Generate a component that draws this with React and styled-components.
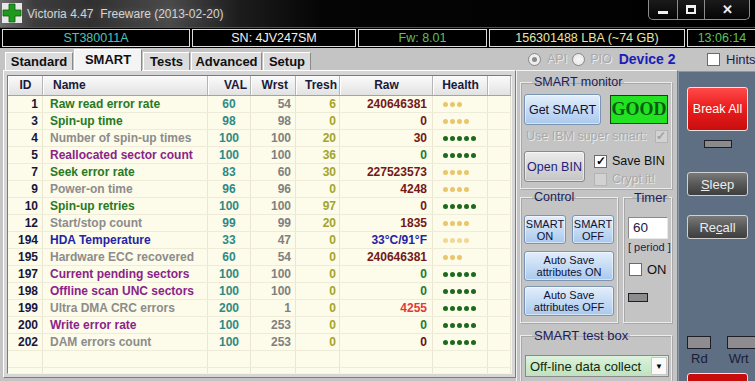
import React from 'react';
import styled, { createGlobalStyle } from 'styled-components';

const Global = createGlobalStyle`
  html, body { margin: 0; padding: 0; background: #000; }
  body { width: 755px; height: 381px; overflow: hidden; font-family: "Liberation Sans", Arial, sans-serif; }
  * { box-sizing: border-box; }
`;

const Window = styled.div`
  width: 755px; height: 381px; display: flex; flex-direction: column;
  background: #000; overflow: hidden;
`;

const TitleBar = styled.div`
  height: 28px; flex: none; display: flex; align-items: flex-start;
  background: linear-gradient(90deg, #6e6e6e 0, #3c3c3c 34px, #303030 90px, #4a4a4a 170px, #1c1c1c 240px, #050505 320px, #000 100%);
  border-bottom: 1px solid #505050;
`;

const AppIcon = styled.svg`
  margin: 3px 0 0 2px; flex: none;
`;

const TitleText = styled.span`
  margin-left: 5px; line-height: 28px; font-size: 12px; color: #d4d4d4;
  white-space: pre; text-shadow: 0 0 6px rgba(255,255,255,0.25);
`;

const WinButtons = styled.div`
  margin-left: auto; margin-right: 5px; display: flex; height: 20px;
  border: 1px solid #8c8c8c; border-top: none; border-radius: 0 0 5px 5px; overflow: hidden;
  background: linear-gradient(#1a1a1a, #050505);
`;

const WinBtn = styled.div`
  width: ${p => p.$w}px; display: flex; align-items: center; justify-content: center;
  color: #f0f0f0; font-weight: bold; font-size: 13px;
  & + & { border-left: 1px solid #8c8c8c; }
`;

const MinGlyph = styled.div`
  width: 10px; height: 3px; background: #f2f2f2; margin-top: 5px;
`;
const MaxGlyph = styled.div`
  width: 10px; height: 9px; border: 2px solid #f2f2f2; border-top-width: 3px;
`;

const InfoBar = styled.div`
  height: 20px; flex: none; display: flex; gap: 2px; padding: 1px 0 1px 2px; background: #000;
`;

const InfoCell = styled.div`
  width: ${p => p.$w}px; flex: none; height: 18px; border: 1px solid #dcdcdc;
  color: ${p => p.$c}; font-size: 12.5px; line-height: 16px; text-align: center; white-space: nowrap;
`;

const Body = styled.div`
  flex: 1; display: flex; background: #c4c4c4; min-height: 0;
`;

const LeftPane = styled.div`
  width: 516px; flex: none; display: flex; flex-direction: column; padding: 0 0 3px 3px;
`;

const TabRow = styled.div`
  height: 22px; flex: none; display: flex; align-items: flex-end; padding-left: 2px; gap: 1px;
`;

const Tab = styled.div`
  width: ${p => p.$w}px; height: ${p => (p.$active ? 22 : 18)}px;
  display: flex; align-items: center; justify-content: center;
  font-weight: bold; font-size: 13px; color: #101010;
  background: ${p => (p.$active ? '#f4f4f4' : '#dcdcdc')};
  border-top: 1px solid #fff; border-left: 1px solid #fff; border-right: 1px solid #8a8a8a;
  margin-bottom: ${p => (p.$active ? -1 : 0)}px; position: relative;
  padding-bottom: ${p => (p.$active ? 3 : 0)}px;
`;

const TabPanel = styled.div`
  flex: 1; display: flex; background: #d6d6d6; padding: 4px 3px 3px 3px;
  border-top: 1px solid #fff; border-left: 1px solid #fff;
  border-right: 1px solid #7c7c7c; border-bottom: 1px solid #7c7c7c;
`;

const Table = styled.div`
  flex: 1; display: flex; flex-direction: column; background: #fdfbe9;
  border: 1px solid; border-color: #7a7a7a #f4f4f4 #f4f4f4 #7a7a7a;
`;

const COLS = '35px 165px 43px 45px 44px 93px 55px 1fr';

const HeadRow = styled.div`
  height: 20px; flex: none; display: grid; grid-template-columns: ${COLS};
  background: linear-gradient(#fbfbfb, #e2e2e2); border-bottom: 1px solid #a4a4a4;
`;

const HeadCell = styled.div`
  border-left: 1px solid #fff; border-right: 1px solid #b4b4b4;
  font-weight: bold; font-size: 12px; line-height: 19px; color: #1a1a3a;
  text-align: ${p => p.$align || 'center'}; padding: 0 ${p => p.$pr || 0}px 0 ${p => p.$pl || 0}px;
`;

const Row = styled.div`
  height: 17px; flex: none; display: grid; grid-template-columns: ${COLS};
  border-bottom: 1px solid #eeecd8;
`;

const Filler = styled.div`
  flex: 1; display: grid; grid-template-columns: ${COLS};
`;

const Cell = styled.div`
  border-right: 1px solid #e9e7d1; font-weight: bold; font-size: 12px; line-height: 16px;
  color: ${p => p.$c || '#000'}; text-align: ${p => p.$align || 'left'};
  padding: 0 ${p => p.$pr || 0}px 0 ${p => p.$pl || 0}px; white-space: nowrap; overflow: hidden;
`;

const DotsCell = styled.div`
  border-right: 1px solid #e9e7d1; display: flex; align-items: center; gap: 2px; padding-left: 10px;
`;

const Dot = styled.span`
  width: 5px; height: 5px; border-radius: 50%; background: ${p => p.$c}; flex: none;
`;

const MidPane = styled.div`
  width: 162px; flex: none; display: flex; flex-direction: column;
`;

const MidTop = styled.div`
  height: 22px; flex: none; display: flex; align-items: center; padding-left: 12px;
`;

const Radio = styled.span`
  width: 13px; height: 13px; border-radius: 50%; flex: none; border: 1px solid #8a8a8a;
  background: radial-gradient(circle, #f8f8f8 0, #e4e4e4 100%);
  display: flex; align-items: center; justify-content: center;
  margin-left: ${p => p.$ml || 0}px;
  &::after { content: ''; width: 5px; height: 5px; border-radius: 50%; background: ${p => (p.$on ? '#8a8a8a' : 'transparent')}; }
`;

const DisabledLabel = styled.span`
  font-size: ${p => p.$fs || 12.5}px; color: #a9a9a9; text-shadow: 1px 1px 0 #eaeaea;
  margin-left: ${p => p.$ml || 0}px; white-space: nowrap;
`;

const DeviceLabel = styled.span`
  margin-left: 7px; font-weight: bold; font-size: 14px; color: #1c1cb8; white-space: nowrap;
`;

const MidPanel = styled.div`
  flex: 1; display: flex; flex-direction: column; padding: 4px 0 0 3px; min-height: 0;
  border: 1px solid; border-color: #f2f2f2 #7a7a7a #7a7a7a #f2f2f2; border-bottom: none;
`;

const Group = styled.fieldset`
  margin: ${p => p.$mt || 0}px 0 0 0; padding: ${p => p.$pt || 0}px 0 0 ${p => p.$pl || 3}px;
  width: ${p => p.$w}px; height: ${p => p.$h}px; min-width: 0; flex: none;
  border: 1px solid #ececec; box-shadow: inset 1px 1px 0 #a8a8a8, 1px 1px 0 #a8a8a8;
  display: flex; flex-direction: column; align-items: flex-start;
`;

const Legend = styled.legend`
  padding: 0 2px; margin-left: ${p => p.$ml || 8}px; font-size: ${p => p.$fs || 12.5}px; color: #1c1c5c; line-height: 15px;
`;

const HRow = styled.div`
  display: flex; align-items: ${p => p.$ai || 'center'}; gap: ${p => p.$gap || 0}px;
  margin-top: ${p => p.$mt || 0}px; margin-left: ${p => p.$ml || 0}px;
`;

const VCol = styled.div`
  display: flex; flex-direction: column; gap: ${p => p.$gap || 0}px;
  margin-top: ${p => p.$mt || 0}px; margin-left: ${p => p.$ml || 0}px;
  align-items: ${p => p.$ai || 'flex-start'};
`;

const BlueButton = styled.div`
  width: ${p => p.$w}px; height: ${p => p.$h}px; flex: none;
  display: flex; align-items: center; justify-content: center; text-align: center;
  margin-top: ${p => p.$mt || 0}px;
  border: 1px solid #7a94b4; border-radius: 3px;
  background: linear-gradient(#e2eefb 0, #c6dcf4 50%, #a9c9ee 100%);
  box-shadow: inset 0 0 0 1px rgba(255,255,255,0.5);
  color: #101030; font-size: ${p => p.$fs || 12.5}px; line-height: ${p => p.$lh || 'normal'};
`;

const GrayButton = styled(BlueButton)`
  border-color: #8a8a8a; background: linear-gradient(#ececec 0, #d8d8d8 50%, #c4c4c4 100%);
  color: #1e1e7a;
`;

const GoodBox = styled.div`
  width: 58px; height: 29px; margin-top: 1px; flex: none;
  display: flex; align-items: center; justify-content: center;
  background: #22e222; border: 1px solid #1c3c1c;
  font-family: "Liberation Serif", "Times New Roman", serif; font-weight: bold; font-size: 18px; color: #0b5a12;
`;

const CheckBox = styled.span`
  width: 13px; height: 13px; flex: none; display: inline-flex; align-items: center; justify-content: center;
  border: 1px solid ${p => (p.$disabled ? '#b4b4b4' : '#6a6a6a')};
  background: ${p => (p.$disabled ? '#d2d2d2' : '#fff')};
  color: ${p => (p.$disabled ? '#a0a0a0' : '#000')}; font-size: 12px; font-weight: bold; line-height: 1;
  margin-left: ${p => p.$ml || 0}px;
`;

const Label = styled.span`
  font-size: ${p => p.$fs || 12.5}px; color: ${p => p.$c || '#101010'}; margin-left: ${p => p.$ml || 0}px;
  margin-top: ${p => p.$mt || 0}px; white-space: nowrap;
`;

const TimerInput = styled.div`
  width: 40px; height: 22px; background: #fff; padding-left: 4px;
  border: 1px solid; border-color: #8a8a8a #e8e8e8 #e8e8e8 #8a8a8a;
  font-size: 13.5px; line-height: 20px; color: #202048;
`;

const Indicator = styled.div`
  width: ${p => p.$w}px; height: ${p => p.$h}px; flex: none;
  background: ${p => p.$bg || '#8a8a8a'}; border: 1px solid #1e1e28;
  margin-top: ${p => p.$mt || 0}px; margin-left: ${p => p.$ml || 0}px;
`;

const Select = styled.div`
  width: 144px; height: 22px; display: flex; align-items: center; margin-top: 12px; margin-left: 1px;
  border: 1px solid #8a8a8a; background: linear-gradient(#dcf2dc, #bfe2bf);
`;

const SelectText = styled.span`
  flex: 1; padding-left: 4px; font-size: 13px; color: #0e2a0e; white-space: nowrap;
`;

const SelectArrow = styled.span`
  width: 16px; height: 18px; margin-right: 1px; background: #fafafa; border: 1px solid #c8c8c8;
  display: flex; align-items: center; justify-content: center; font-size: 8px; color: #000;
`;

const RightCol = styled.div`
  flex: 1; display: flex; flex-direction: column;
`;

const RightTop = styled.div`
  height: 23px; flex: none; display: flex; align-items: center; padding-left: 29px;
`;

const RightPanel = styled.div`
  flex: 1; background: #5e6e83; border-top: 1px solid #8a98a8; border-left: 1px solid #8a98a8;
  display: flex; flex-direction: column; padding-left: 8px;
`;

const RedButton = styled.div`
  width: 61px; height: ${p => p.$h}px; flex: none; margin-top: ${p => p.$mt || 0}px;
  display: flex; align-items: center; justify-content: center;
  background: ${p => p.$flat ? '#c80c0c' : 'linear-gradient(#ff4a4a 0, #ec1e1e 45%, #c80e0e 100%)'};
  border: 1px solid #f0e0e0; border-radius: 3px; color: #fff; font-size: 12.5px;
`;

const DarkButton = styled.div`
  width: 61px; height: ${p => p.$h}px; flex: none; margin-top: ${p => p.$mt}px;
  display: flex; align-items: center; justify-content: center;
  background: linear-gradient(#7a7a7a 0, #585858 50%, #3e3e3e 100%);
  border: 1px solid #d0d0d0; border-radius: 3px; color: #ececec; font-size: 13px;
  & u { text-decoration: underline; }
`;

const IndicatorLabel = styled.span`
  font-size: 13px; color: #1c1c34; margin-left: ${p => p.$ml || 0}px;
`;

const C = {
  green: '#257a25', gray: '#8c8c8c', purple: '#8a248a', blue: '#2424a6',
  maroon: '#741818', red: '#e23a3a', yel: '#e9c66a', yelL: '#f0d898', dg: '#1d6a1d',
};

const rows = [
  [1, 'Raw read error rate', C.green, 60, 54, 6, '240646381', C.maroon, 3, C.yel],
  [3, 'Spin-up time', C.green, 98, 98, 0, '0', C.maroon, 4, C.yel],
  [4, 'Number of spin-up times', C.gray, 100, 100, 20, '30', C.maroon, 5, C.dg],
  [5, 'Reallocated sector count', C.purple, 100, 100, 36, '0', C.green, 5, C.dg],
  [7, 'Seek error rate', C.green, 83, 60, 30, '227523573', C.maroon, 4, C.yel],
  [9, 'Power-on time', C.gray, 96, 96, 0, '4248', C.maroon, 4, C.yel],
  [10, 'Spin-up retries', C.green, 100, 100, 97, '0', C.maroon, 5, C.dg],
  [12, 'Start/stop count', C.gray, 99, 99, 20, '1835', C.maroon, 4, C.yel],
  [194, 'HDA Temperature', C.blue, 33, 47, 0, '33°C/91°F', C.blue, 4, C.yelL],
  [195, 'Hardware ECC recovered', C.gray, 60, 54, 0, '240646381', C.maroon, 3, C.yel],
  [197, 'Current pending sectors', C.purple, 100, 100, 0, '0', C.green, 5, C.dg],
  [198, 'Offline scan UNC sectors', C.purple, 100, 100, 0, '0', C.green, 5, C.dg],
  [199, 'Ultra DMA CRC errors', C.gray, 200, 1, 0, '4255', C.red, 5, C.dg],
  [200, 'Write error rate', C.purple, 100, 253, 0, '0', C.green, 5, C.dg],
  [202, 'DAM errors count', C.gray, 100, 253, 0, '0', '#6a1010', 5, C.dg],
];

function DataRow({ r }) {
  const [id, name, nc, val, wrst, tresh, raw, rc, dots, dc] = r;
  return (
    <Row>
      <Cell $c="#16163c" $align="right" $pr={4}>{id}</Cell>
      <Cell $c={nc} $pl={7}>{name}</Cell>
      <Cell $c="#2e8a86" $align="center">{val}</Cell>
      <Cell $c="#808080" $align="right" $pr={4}>{wrst}</Cell>
      <Cell $c="#a4a42a" $align="right" $pr={3}>{tresh}</Cell>
      <Cell $c={rc} $align="right" $pr={5}>{raw}</Cell>
      <DotsCell>
        {Array.from({ length: dots }).map((_, i) => <Dot key={i} $c={dc} />)}
      </DotsCell>
      <Cell />
    </Row>
  );
}

export default function App() {
  return (
    <Window>
      <Global />
      <TitleBar>
        <AppIcon width="20" height="20" viewBox="0 0 20 20">
          <rect x="0" y="0" width="20" height="20" fill="#e8e8e8" />
          <path d="M7 1h6v6h6v6h-6v6H7v-6H1V7h6z" fill="#1f9a1f" stroke="#0c5a0c" strokeWidth="0.8" />
        </AppIcon>
        <TitleText>Victoria 4.47  Freeware (2013-02-20)</TitleText>
        <WinButtons>
          <WinBtn $w={28}><MinGlyph /></WinBtn>
          <WinBtn $w={27}><MaxGlyph /></WinBtn>
          <WinBtn $w={45}>✕</WinBtn>
        </WinButtons>
      </TitleBar>

      <InfoBar>
        <InfoCell $w={188} $c="#4cc2b4">ST380011A</InfoCell>
        <InfoCell $w={164} $c="#f0f0f0">SN: 4JV247SM</InfoCell>
        <InfoCell $w={129} $c="#5cc05c">Fw: 8.01</InfoCell>
        <InfoCell $w={196} $c="#e6e6a4">156301488 LBA (~74 GB)</InfoCell>
        <InfoCell $w={70} $c="#5cc05c">13:06:14</InfoCell>
      </InfoBar>

      <Body>
        <LeftPane>
          <TabRow>
            <Tab $w={68}>Standard</Tab>
            <Tab $w={68} $active>SMART</Tab>
            <Tab $w={47}>Tests</Tab>
            <Tab $w={71}>Advanced</Tab>
            <Tab $w={48}>Setup</Tab>
          </TabRow>
          <TabPanel>
            <Table>
              <HeadRow>
                <HeadCell>ID</HeadCell>
                <HeadCell $align="left" $pl={9}>Name</HeadCell>
                <HeadCell $align="right" $pr={3}>VAL</HeadCell>
                <HeadCell $align="right" $pr={7}>Wrst</HeadCell>
                <HeadCell $align="right" $pr={2}>Tresh</HeadCell>
                <HeadCell>Raw</HeadCell>
                <HeadCell>Health</HeadCell>
                <HeadCell />
              </HeadRow>
              {rows.map(r => <DataRow key={r[0]} r={r} />)}
              <Row>
                <Cell /><Cell /><Cell /><Cell /><Cell /><Cell /><Cell /><Cell />
              </Row>
              <Filler>
                <Cell /><Cell /><Cell /><Cell /><Cell /><Cell /><Cell /><Cell />
              </Filler>
            </Table>
          </TabPanel>
        </LeftPane>

        <MidPane>
          <MidTop>
            <Radio $on />
            <DisabledLabel $ml={6}>API</DisabledLabel>
            <Radio $ml={5} />
            <DisabledLabel $ml={5}>PIO</DisabledLabel>
            <DeviceLabel>Device 2</DeviceLabel>
          </MidTop>
          <MidPanel>
            <Group $w={152} $h={114} $pt={4} $pl={3}>
              <Legend>SMART monitor</Legend>
              <HRow $ai="flex-start" $gap={9}>
                <BlueButton $w={77} $h={31}>Get SMART</BlueButton>
                <GoodBox>GOOD</GoodBox>
              </HRow>
              <HRow $mt={4} $ml={2}>
                <DisabledLabel>Use IBM super smart:</DisabledLabel>
                <CheckBox $disabled $ml={8}>✓</CheckBox>
              </HRow>
              <HRow $ai="flex-start" $mt={8}>
                <GrayButton $w={61} $h={31}>Open BIN</GrayButton>
                <VCol $ml={9} $mt={3} $gap={4}>
                  <HRow>
                    <CheckBox>✓</CheckBox>
                    <Label $ml={5}>Save BIN</Label>
                  </HRow>
                  <HRow>
                    <CheckBox $disabled />
                    <DisabledLabel $ml={5}>Crypt it!</DisabledLabel>
                  </HRow>
                </VCol>
              </HRow>
            </Group>

            <HRow $ai="flex-start" $gap={5} $mt={1}>
              <Group $w={98} $h={133} $pt={10} $pl={3}>
                <Legend>Control</Legend>
                <HRow $gap={6}>
                  <BlueButton $w={42} $h={29} $fs={11} $lh="12px">SMART<br />ON</BlueButton>
                  <BlueButton $w={42} $h={29} $fs={11} $lh="12px">SMART<br />OFF</BlueButton>
                </HRow>
                <BlueButton $w={90} $h={30} $fs={11} $lh="12px" $mt={7}>Auto Save<br />attributes ON</BlueButton>
                <BlueButton $w={90} $h={30} $fs={11} $lh="12px" $mt={5}>Auto Save<br />attributes OFF</BlueButton>
              </Group>
              <Group $w={49} $h={133} $pt={12} $pl={4}>
                <Legend $ml={4} $fs={13}>Timer</Legend>
                <TimerInput>60</TimerInput>
                <Label $fs={11} $c="#1c1c50" $mt={2}>[ period ]</Label>
                <HRow $mt={9} $ml={1}>
                  <CheckBox />
                  <Label $ml={5} $fs={13}>ON</Label>
                </HRow>
                <Indicator $w={20} $h={9} $mt={16} $bg="#8c8c8c" />
              </Group>
            </HRow>

            <Group $w={152} $h={60} $pt={0} $pl={3} $mt={5}>
              <Legend $fs={13}>SMART test box</Legend>
              <Select>
                <SelectText>Off-line data collect</SelectText>
                <SelectArrow>▼</SelectArrow>
              </Select>
            </Group>
          </MidPanel>
        </MidPane>

        <RightCol>
          <RightTop>
            <CheckBox />
            <Label $ml={6} $fs={13} $c="#1c1c50">Hints</Label>
          </RightTop>
          <RightPanel>
            <RedButton $h={44} $mt={15}>Break All</RedButton>
            <Indicator $w={28} $h={8} $mt={9} $ml={17} $bg="#8a8a8a" />
            <DarkButton $h={24} $mt={24}><span><u>S</u>leep</span></DarkButton>
            <DarkButton $h={24} $mt={19}><span>Re<u>c</u>all</span></DarkButton>
            <HRow $ai="flex-start" $mt={97} $gap={16}>
              <Indicator $w={24} $h={13} $bg="#8e8c8e" />
              <Indicator $w={30} $h={13} $bg="#8e8c8e" />
            </HRow>
            <HRow $mt={2}>
              <IndicatorLabel $ml={4}>Rd</IndicatorLabel>
              <IndicatorLabel $ml={21}>Wrt</IndicatorLabel>
            </HRow>
            <RedButton $h={30} $mt={7} $flat />
          </RightPanel>
        </RightCol>
      </Body>
    </Window>
  );
}
